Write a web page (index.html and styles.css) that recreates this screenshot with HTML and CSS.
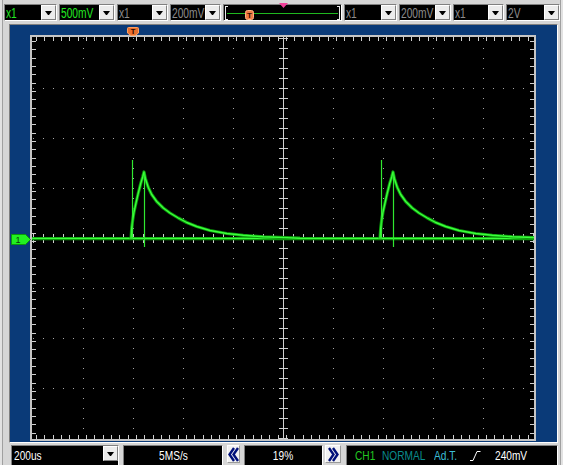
FILE: index.html
```html
<!DOCTYPE html>
<html>
<head>
<meta charset="utf-8">
<title>Scope</title>
<link rel="stylesheet" href="styles.css">
</head>
<body>
<div class="app">
  <div class="topbar">
    <div class="combo w53"><span class="val green"><span class="t">x1</span></span><span class="btn"><i class="tri"></i></span></div>
    <div class="combo w56"><span class="val green"><span class="t">500mV</span></span><span class="btn"><i class="tri"></i></span></div>
    <div class="combo w51"><span class="val gray"><span class="t">x1</span></span><span class="btn"><i class="tri"></i></span></div>
    <div class="combo w51"><span class="val gray"><span class="t">200mV</span></span><span class="btn"><i class="tri"></i></span></div>
    <div class="trig">
      <span class="brk brk-l"></span>
      <span class="tline"></span>
      <span class="brk brk-r"></span>
      <svg class="tmark" width="9" height="10" viewBox="0 0 9 10"><rect x="0.5" y="0.5" width="8" height="9" rx="2" fill="#f07a45" stroke="#ffb080"/><text x="4.5" y="8.3" text-anchor="middle" font-family="Liberation Sans, sans-serif" font-size="8" font-weight="bold" fill="#3a1000">T</text></svg>
      <svg class="pink" width="9" height="5" viewBox="0 0 9 5"><polygon points="0,0 9,0 4.5,5" fill="#f2409a"/></svg>
    </div>
    <div class="combo w53"><span class="val gray"><span class="t">x1</span></span><span class="btn"><i class="tri"></i></span></div>
    <div class="combo w52"><span class="val gray"><span class="t">200mV</span></span><span class="btn"><i class="tri"></i></span></div>
    <div class="combo w51"><span class="val gray"><span class="t">x1</span></span><span class="btn"><i class="tri"></i></span></div>
    <div class="combo w54"><span class="val gray"><span class="t">2V</span></span><span class="btn"><i class="tri"></i></span></div>
  </div>

  <div class="panel">
    <svg class="trigmark" width="12" height="9" viewBox="0 0 12 9"><path d="M1.5 0.5 H10.5 Q11.5 0.5 11.5 1.5 V6 L8 8.5 H4 L0.5 6 V1.5 Q0.5 0.5 1.5 0.5 Z" fill="#e8702e" stroke="#ffa060"/><text x="6" y="7.2" text-anchor="middle" font-family="Liberation Sans, sans-serif" font-size="7.5" font-weight="bold" fill="#2a0800">T</text></svg>
    <svg class="chmark" width="20" height="11" viewBox="0 0 20 11"><polygon points="0.5,0.5 14.5,0.5 19.5,5.5 14.5,10.5 0.5,10.5" fill="#22f022" stroke="#0a9a0a"/><text x="7" y="9.3" text-anchor="middle" font-family="Liberation Sans, sans-serif" font-size="9" fill="#0b3d0b">1</text></svg>
    <div class="screen">
      <svg class="plot" width="502" height="402" viewBox="32 37 502 402">
        <rect x="32" y="37" width="502" height="402" fill="#000"/>
        <g shape-rendering="crispEdges">
          <g stroke="#a8a8a8" stroke-width="1" stroke-dasharray="1 9">
            <line x1="83.5" y1="38" x2="83.5" y2="438"/>
            <line x1="133.5" y1="38" x2="133.5" y2="438"/>
            <line x1="183.5" y1="38" x2="183.5" y2="438"/>
            <line x1="233.5" y1="38" x2="233.5" y2="438"/>
            <line x1="333.5" y1="38" x2="333.5" y2="438"/>
            <line x1="383.5" y1="38" x2="383.5" y2="438"/>
            <line x1="433.5" y1="38" x2="433.5" y2="438"/>
            <line x1="483.5" y1="38" x2="483.5" y2="438"/>
            <line x1="33" y1="88.5" x2="533" y2="88.5"/>
            <line x1="33" y1="138.5" x2="533" y2="138.5"/>
            <line x1="33" y1="188.5" x2="533" y2="188.5"/>
            <line x1="33" y1="288.5" x2="533" y2="288.5"/>
            <line x1="33" y1="338.5" x2="533" y2="338.5"/>
            <line x1="33" y1="388.5" x2="533" y2="388.5"/>
          </g>
          <g stroke="#cfcfcf">
            <line x1="283.5" y1="37" x2="283.5" y2="439" stroke-width="1"/>
            <line x1="32" y1="238.5" x2="534" y2="238.5" stroke-width="1"/>
            <line x1="283.5" y1="38" x2="283.5" y2="439" stroke-width="9" stroke-dasharray="1 9"/>
            <line x1="33" y1="238.5" x2="534" y2="238.5" stroke-width="9" stroke-dasharray="1 9"/>
            <line x1="36" y1="39" x2="534" y2="39" stroke-width="4" stroke-dasharray="1 7.333"/>
            <line x1="36" y1="437" x2="534" y2="437" stroke-width="4" stroke-dasharray="1 7.333"/>
            <line x1="34" y1="41" x2="34" y2="439" stroke-width="4" stroke-dasharray="1 7.333"/>
            <line x1="532" y1="41" x2="532" y2="439" stroke-width="4" stroke-dasharray="1 7.333"/>
          </g>
        </g>
        <g fill="none" stroke-linejoin="round">
          <path d="M32 238.6 H534" stroke="#0c9a0c" stroke-width="3.2"/>
          <path d="M32 238.4 H534" stroke="#3cff3c" stroke-width="1.4"/>
          <g id="pulse">
            <path d="M131 238.5 L131.7 228 L132.7 220 L134 212 L136 203 L138.3 193 L140.7 183.5 L142.7 177 L144 172 L145.5 179 L148.3 187.5 L151.7 194.5 L156.7 201.5 L163.3 208 L170 213 L178.3 218 L186.7 222.5 L196.7 226.5 L210 230.5 L226.7 233.5 L243.3 235.3 L263.3 236.8 L286.7 237.6 L300 238.2" stroke="#0c9a0c" stroke-width="3.2"/>
            <path d="M131 238.5 L131.7 228 L132.7 220 L134 212 L136 203 L138.3 193 L140.7 183.5 L142.7 177 L144 172 L145.5 179 L148.3 187.5 L151.7 194.5 L156.7 201.5 L163.3 208 L170 213 L178.3 218 L186.7 222.5 L196.7 226.5 L210 230.5 L226.7 233.5 L243.3 235.3 L263.3 236.8 L286.7 237.6 L300 238.2" stroke="#3cff3c" stroke-width="1.4"/>
            <path d="M132.5 160 V238" stroke="#30e830" stroke-width="1.2"/>
            <path d="M144.5 172 V247" stroke="#30e830" stroke-width="1.2"/>
          </g>
          <use href="#pulse" transform="translate(249 0)"/>
        </g>
      </svg>
    </div>
  </div>

  <div class="bottombar">
    <div class="bcombo w108"><span class="bval"><span class="t">200us</span></span><span class="btn"><i class="tri"></i></span></div>
    <div class="bcombo w100 center"><span class="bval"><span class="t tc">5MS/s</span></span></div>
    <div class="arrowbtn w13"><svg width="11" height="15" viewBox="0 0 11 15"><polyline points="6,1 1.5,7.5 6,14" fill="none" stroke="#00107a" stroke-width="2.4"/><polyline points="10,1 5.5,7.5 10,14" fill="none" stroke="#00107a" stroke-width="2.4"/></svg></div>
    <div class="bcombo w79 center"><span class="bval"><span class="t tc">19%</span></span></div>
    <div class="arrowbtn w16 shift-l"><svg width="11" height="15" viewBox="0 0 11 15"><polyline points="1,1 5.5,7.5 1,14" fill="none" stroke="#00107a" stroke-width="2.4"/><polyline points="5,1 9.5,7.5 5,14" fill="none" stroke="#00107a" stroke-width="2.4"/></svg></div>
    <div class="bcombo status">
      <span class="s-ch"><span class="t">CH1</span></span>
      <span class="s-mode"><span class="t">NORMAL</span></span>
      <span class="s-adt"><span class="t">Ad.T.</span></span>
      <span class="s-edge"><svg width="11" height="10" viewBox="0 0 11 10"><polyline points="0,9.5 3,9.5 7,0.5 10.5,0.5" fill="none" stroke="#ffffff" stroke-width="1"/></svg></span>
      <span class="s-val"><span class="t">240mV</span></span>
    </div>
  </div>
</div>
</body>
</html>
```

FILE: styles.css
```css
* { box-sizing: border-box; }

html, body {
  margin: 0;
  padding: 0;
}

body {
  width: 563px;
  height: 465px;
  overflow: hidden;
  background: #e2e2e2;
  font-family: "Liberation Sans", Arial, sans-serif;
  font-size: 13px;
}

/* narrow text, like the instrument's condensed UI font */
.t {
  display: inline-block;
  white-space: nowrap;
  transform: scaleX(0.78);
  transform-origin: 0 50%;
}
.t.tc { transform-origin: 50% 50%; }

.app {
  margin: 0 2px;
  height: 465px;
  border-left: 1px solid #a0a0a0;
  border-right: 1px solid #a0a0a0;
  background: #d6d6d6;
  display: flex;
  flex-direction: column;
}

/* ---------- top bar ---------- */
.topbar {
  height: 24px;
  flex: none;
  padding: 4px 0 0 1px;
  display: flex;
  gap: 2px;
  align-items: flex-start;
}

.combo {
  height: 17px;
  flex: none;
  display: flex;
  background: #000;
  border: 1px solid;
  border-color: #808080 #ffffff #ffffff #808080;
}

.w51 { width: 51px; }
.w52 { width: 52px; }
.w53 { width: 53px; }
.w54 { width: 54px; }
.w56 { width: 56px; }

.val {
  flex: 1;
  min-width: 0;
  height: 15px;
  padding-left: 1px;
  font-size: 14px;
  line-height: 17px;
  white-space: nowrap;
  overflow: hidden;
}

.val .t { transform: scaleX(0.73); }

.green { color: #22e822; }
.gray { color: #8c8c8c; }

.btn {
  flex: none;
  width: 15px;
  height: 15px;
  background: #ececec;
  border: 1px solid;
  border-color: #ffffff #808080 #808080 #ffffff;
  display: flex;
  align-items: center;
  justify-content: center;
}

.tri {
  display: block;
  width: 1px;
  height: 0;
  border-top: 4px solid #000;
  border-left: 3px solid transparent;
  border-right: 3px solid transparent;
  box-sizing: content-box;
}

.trig {
  position: relative;
  flex: none;
  width: 119px;
  height: 17px;
  background: #000;
  border: 1px solid;
  border-color: #808080 #ffffff #ffffff #808080;
}

.brk {
  position: absolute;
  top: 1px;
  width: 3px;
  height: 14px;
  border: 1px solid #e8e8e8;
}
.brk-l { left: 1px; border-right: none; }
.brk-r { right: 1px; border-left: none; }

.tline {
  position: absolute;
  left: 3px;
  right: 3px;
  top: 8px;
  height: 1px;
  background: #1fb81f;
}

.tmark {
  position: absolute;
  left: 21px;
  top: 5px;
  display: block;
}

.pink {
  position: absolute;
  left: 55px;
  top: -2px;
  display: block;
}

/* ---------- scope panel ---------- */
.panel {
  position: relative;
  flex: none;
  height: 419px;
  margin: 0 2px 0 6px;
  padding: 10px 0 0 20px;
  background: #0a3a78;
  border: 1px solid;
  border-color: #808080 #ffffff #ffffff #808080;
}

.trigmark {
  position: absolute;
  left: 117px;
  top: 2px;
  display: block;
}

.chmark {
  position: absolute;
  left: 1px;
  top: 209px;
  display: block;
}

.screen {
  width: 506px;
  height: 406px;
  border: 2px solid #c4c4c4;
  background: #000;
}

.plot { display: block; }

/* ---------- bottom bar ---------- */
.bottombar {
  flex: 1;
  padding: 2px 0 0 8px;
  display: flex;
  gap: 4px;
  align-items: flex-start;
}

.bcombo {
  height: 24px;
  flex: none;
  display: flex;
  align-items: flex-start;
  background: #000;
  border: 1px solid;
  border-color: #808080 #ffffff #ffffff #808080;
  color: #ffffff;
  line-height: 19px;
  white-space: nowrap;
}

.w108 { width: 108px; }
.w100 { width: 100px; }
.w79 { width: 79px; }
.w13 { width: 13px; }
.w16 { width: 16px; }

.bval {
  flex: 1;
  min-width: 0;
  padding-left: 2px;
  overflow: hidden;
}

.center .bval {
  padding-left: 0;
  text-align: center;
}

.arrowbtn {
  flex: none;
  height: 18px;
  background: #f2f2f2;
  border: 1px solid;
  border-color: #ffffff #9a9a9a #9a9a9a #ffffff;
  display: flex;
  align-items: center;
  justify-content: center;
}
.arrowbtn svg { display: block; }

.shift-l { margin-left: -2px; }

.status {
  width: 212px;
  margin-left: 1px;
  padding-left: 8px;
}

.status > span { flex: none; display: block; }
.s-ch { width: 27px; color: #22c822; }
.s-mode { width: 52px; color: #0a8c8c; }
.s-adt { width: 36px; color: #3cbcd6; }
.s-edge { width: 25px; padding-top: 5px; }
.s-edge svg { display: block; }
.s-val { color: #ffffff; }
```
